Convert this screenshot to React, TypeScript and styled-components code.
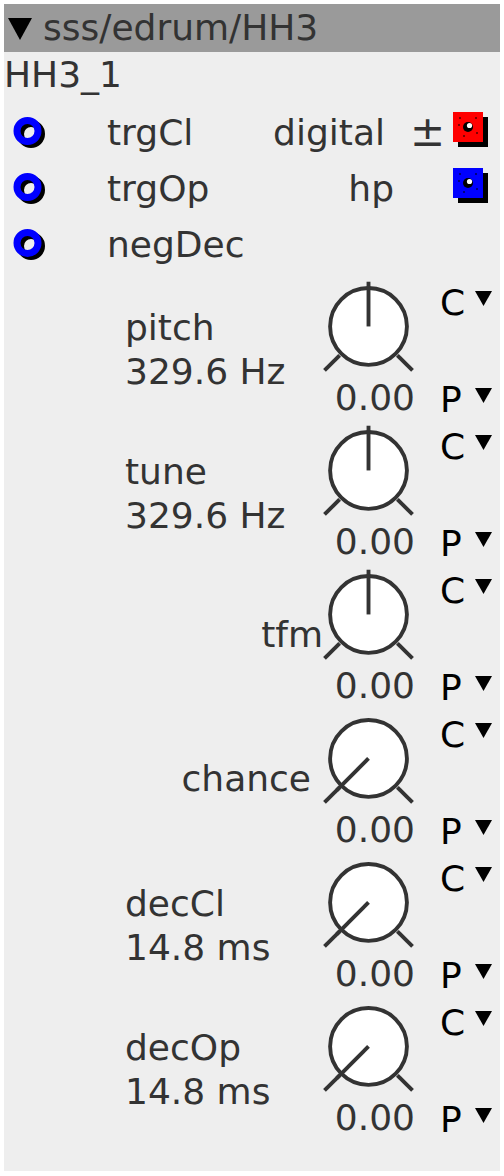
import React from "react";
import styled, { createGlobalStyle } from "styled-components";

const Global = createGlobalStyle`
  html, body { margin: 0; padding: 0; background: #ffffff; }
  body { font-family: "DejaVu Sans", sans-serif; }
`;

const Page = styled.div`
  padding: 4px;
  width: 496px;
`;

const Panel = styled.div`
  background: #eeeeee;
  width: 496px;
  height: 1167px;
  font-family: "DejaVu Sans", sans-serif;
  font-size: 36px;
  color: #333333;
  display: flex;
  flex-direction: column;
`;

const Header = styled.div`
  height: 48px;
  background: #9a9a9a;
  display: flex;
  align-items: center;
  padding-left: 4px;
  gap: 11px;
  line-height: 42px;
  white-space: nowrap;
`;

const Tri = styled.span<{ $lift: number }>`
  display: inline-block;
  flex-shrink: 0;
  width: 17px;
  height: 15px;
  background: #000000;
  clip-path: polygon(0 0, 100% 0, 50% 100%);
  vertical-align: ${(p) => p.$lift}px;
`;

const HeaderTri = styled(Tri)`
  width: 24px;
  height: 22px;
  margin-top: 2px;
`;

const Name = styled.div`
  height: 52px;
  box-sizing: border-box;
  padding-top: 2px;
  line-height: 42px;
`;

const Row = styled.div`
  height: 56px;
  display: flex;
  align-items: center;
  white-space: nowrap;
`;

const IconCell = styled.div`
  width: 103px;
  display: flex;
  align-items: center;
  padding-left: 8px;
  box-sizing: border-box;
`;

const RowLabel = styled.div`
  width: 160px;
`;

const RowValue = styled.div<{ $pad: number }>`
  width: 130px;
  box-sizing: border-box;
  text-align: right;
  padding-right: ${(p) => p.$pad}px;
`;

const PlusMinus = styled.div`
  width: 56px;
  padding-left: 13px;
  box-sizing: border-box;
  font-size: 42px;
  line-height: 42px;
`;

const SquareCell = styled.div`
  display: flex;
  align-items: center;
`;

const Section = styled.div`
  height: 144px;
  display: flex;
  white-space: nowrap;
`;

const LabelArea = styled.div<{ $single: boolean; $pad: number }>`
  width: 319px;
  box-sizing: border-box;
  display: flex;
  flex-direction: column;
  justify-content: center;
  align-items: ${(p) => (p.$single ? "flex-end" : "flex-start")};
  padding-left: 121px;
  padding-right: ${(p) => p.$pad}px;
  padding-top: ${(p) => (p.$single ? 6 : 12)}px;
  line-height: 44px;
`;

const KnobCol = styled.div`
  width: 92px;
  display: flex;
  flex-direction: column;
`;

const KnobValue = styled.div`
  text-align: right;
  line-height: 36px;
  margin-top: 3px;
`;

const CPCol = styled.div`
  display: flex;
  flex-direction: column;
  justify-content: space-between;
  padding-left: 25px;
  padding-top: 15px;
  line-height: 32px;
  color: #000000;
  height: 144px;
  box-sizing: border-box;
`;

const CPLetter = styled.span`
  display: inline-block;
  width: 35px;
`;

const Ring = () => (
  <svg width="40" height="40" viewBox="0 0 40 40">
    <circle cx="19" cy="22" r="10.5" fill="none" stroke="#000" strokeWidth="7" />
    <circle cx="15.5" cy="19" r="10.5" fill="none" stroke="#0000ff" strokeWidth="7" />
  </svg>
);

const Square = ({ color }: { color: string }) => (
  <svg width="40" height="40" viewBox="0 0 40 40">
    <rect x="5" y="5" width="30" height="30" fill="#000" />
    <rect x="0" y="0" width="30" height="30" fill={color} />
    <rect x="6" y="6" width="18" height="18" fill="none" stroke="#000" strokeWidth="1" strokeDasharray="2 14" />
    <circle cx="15" cy="15" r="5" fill="#000" />
    <circle cx="16.5" cy="13.5" r="2.6" fill="#fff" />
  </svg>
);

const Knob = ({ angle }: { angle: number }) => {
  const cx = 45.5;
  const cy = 56;
  const rad = (angle * Math.PI) / 180;
  const px = cx + Math.sin(rad) * 46;
  const py = cy - Math.cos(rad) * 46;
  const a = Math.SQRT1_2;
  return (
    <svg width="92" height="108" viewBox="0 0 92 108">
      <circle cx={cx} cy={cy} r="39.5" fill="#fff" stroke="#333" strokeWidth="4" />
      <line x1={cx - 42 * a} y1={cy + 42 * a} x2={cx - 64 * a} y2={cy + 64 * a} stroke="#333" strokeWidth="4" />
      <line x1={cx + 42 * a} y1={cy + 42 * a} x2={cx + 64 * a} y2={cy + 64 * a} stroke="#333" strokeWidth="4" />
      <line x1={cx} y1={cy} x2={px} y2={py} stroke="#333" strokeWidth="4" />
    </svg>
  );
};

type Ctl = { name: string; sub?: string; angle: number; pad?: number };

const controls: Ctl[] = [
  { name: "pitch", sub: "329.6 Hz", angle: 0 },
  { name: "tune", sub: "329.6 Hz", angle: 0 },
  { name: "tfm", angle: 0, pad: 0 },
  { name: "chance", angle: -135, pad: 12 },
  { name: "decCl", sub: "14.8 ms", angle: -135 },
  { name: "decOp", sub: "14.8 ms", angle: -135 },
];

export default function App() {
  return (
    <>
      <Global />
      <Page>
        <Panel>
          <Header>
            <HeaderTri $lift={0} />
            <span>sss/edrum/HH3</span>
          </Header>
          <Name>HH3_1</Name>
          <Row>
            <IconCell><Ring /></IconCell>
            <RowLabel>trgCl</RowLabel>
            <RowValue $pad={12}>digital</RowValue>
            <PlusMinus>±</PlusMinus>
            <SquareCell><Square color="#ff0000" /></SquareCell>
          </Row>
          <Row>
            <IconCell><Ring /></IconCell>
            <RowLabel>trgOp</RowLabel>
            <RowValue $pad={3}>hp</RowValue>
            <PlusMinus />
            <SquareCell><Square color="#0000ff" /></SquareCell>
          </Row>
          <Row>
            <IconCell><Ring /></IconCell>
            <RowLabel>negDec</RowLabel>
          </Row>
          {controls.map((c) => (
            <Section key={c.name}>
              <LabelArea $single={!c.sub} $pad={c.pad ?? 0}>
                <span>{c.name}</span>
                {c.sub && <span>{c.sub}</span>}
              </LabelArea>
              <KnobCol>
                <Knob angle={c.angle} />
                <KnobValue>0.00</KnobValue>
              </KnobCol>
              <CPCol>
                <div><CPLetter>C</CPLetter><Tri $lift={9} /></div>
                <div><CPLetter>P</CPLetter><Tri $lift={9} /></div>
              </CPCol>
            </Section>
          ))}
        </Panel>
      </Page>
    </>
  );
}
